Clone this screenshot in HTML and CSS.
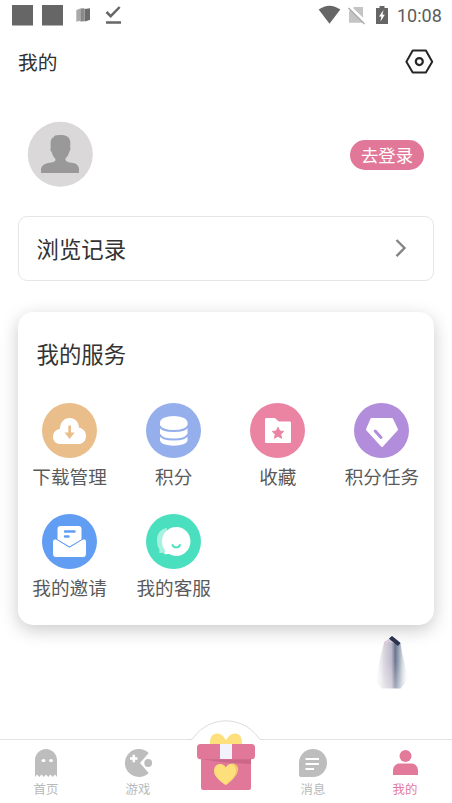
FILE: index.html
```html
<!DOCTYPE html>
<html lang="zh-CN">
<head>
<meta charset="utf-8">
<meta name="viewport" content="width=device-width, initial-scale=1">
<title>我的</title>
<link rel="stylesheet" href="styles.css">
</head>
<body>
<div class="app">
  <header class="status">
    <svg width="130" height="30" viewBox="0 0 130 30">
      <path fill="#666" d="M12 5h21v20.500h-21zM42 5h21v20.500h-21z"/>
      <path fill="#aaa" d="M76.300 10l4-1.600v12.400l-4 1z"/>
      <path fill="#888" d="M80.300 8.400l4.200-.2v13l-4.200 .4z"/>
      <path fill="#6c6c6c" d="M84.500 9l5.500-.8v11.600l-4 1.400h-1.500z"/>
      <path stroke="#aaa" stroke-width=".5" d="M80.300 9v12M84.300 9v12"/>
      <path fill="none" stroke="#666" stroke-width="2.500" d="M106.500 12l4.200 4.200 9-9.200M106 22.500h15"/>
    </svg>
    <svg class="signals" width="75" height="30" viewBox="316 0 75 30">
      <path fill="#666" d="M318.700 9.600Q329.500 1.700 340.300 9.600L329.500 23.800z"/>
      <path fill="#c4c4c4" d="M354 7h9v15.700h-14V11.500z"/>
      <path stroke="#fff" stroke-width="3.500" d="M349 6.500L366 23"/>
      <path stroke="#aaa" stroke-width="1.500" d="M348.500 8L364.500 24"/>
      <path fill="#666" d="M379.500 6h5v2h3.500v16h-12V8h3.500z"/>
      <path fill="#fff" d="M383.500 10l-4.500 6.500h2.300l-.8 5 4.300-6.700h-2.300z"/>
    </svg>
    <span class="clock">10:08</span>
  </header>
  <div class="titlebar">
    <h1>我的</h1>
    <svg width="30" height="30" viewBox="404 47 30 30" fill="none" stroke="#262626" stroke-width="2" stroke-linejoin="round">
      <path d="M412.700 50.600h13.200l6.300 11.200-6.300 10.700h-13.200l-6.300-10.700z"/><circle cx="419.300" cy="61.600" r="3.500" stroke-width="2.200"/>
    </svg>
  </div>
  <section class="profile">
    <svg width="66" height="66" viewBox="27 121 66 66">
      <circle cx="60.300" cy="154.300" r="32.500" fill="#dad8d9"/>
      <path fill="#999" d="M41 173v-3c0-4 3-6 7-7 5-.8 8-1 7.500-4-2-2-3.300-4.500-3.800-7-1.600-1-1.700-3-.9-4.500-.3-6-.3-9 2.600-10 .3-1.800 2-2.300 4-2.300 4-.3 9 0 11 2.300 2 2 2.300 5 1.700 9.500.7 1.500.5 3.500-.7 4.500-.7 3-2 5-4 7-.4 3 3 4 7.600 4.600 4 .7 6 2.900 6 6.900v3z"/>
    </svg>
    <button class="login">去登录</button>
  </section>
  <a class="history"><span>浏览记录</span>
    <svg width="16" height="22" viewBox="0 0 16 22" fill="none" stroke="#858585" stroke-width="2.400"><path d="M3.500 3l8 8-8 8.200"/></svg>
  </a>
  <section class="services">
    <h2>我的服务</h2>
    <div class="grid">
      <div class="service"><svg viewBox="42 403 55 55"><circle cx="69.500" cy="430.500" r="27.500" fill="#e9be8b"/><path fill="#fff" d="M61 444c-5 0-8-3.200-8-7.100 0-4.400 3-7.300 7-8.100 0-6 4-10.800 9.500-10.800s9.500 4.200 9.500 9.800c4.200.5 7 4 7 8.100 0 4.800-3 8.100-8 8.100z"/><path fill="#e9be8b" d="M68.300 425.500h2.700v7h3.700l-5.100 6.500-5-6.500h3.700z"/></svg><span>下载管理</span></div>
      <div class="service"><svg viewBox="146 403 55 55"><circle cx="173.500" cy="430.500" r="27.500" fill="#95aeec"/><path fill="#fff" d="M160 422.500v17.500c0 7.500 27.500 7.500 27.500 0v-17.500z"/><ellipse cx="173.700" cy="422.500" rx="13.700" ry="6.600" fill="#fff"/><path fill="none" stroke="#95aeec" stroke-width="2" d="M159.500 426c3 6.700 25.500 6.700 28.500 0M159.500 434.500c3 6.800 25.500 6.800 28.500 0"/></svg><span>积分</span></div>
      <div class="service"><svg viewBox="250 403 55 55"><circle cx="277.500" cy="430.500" r="27.500" fill="#eb84a3"/><path fill="#fff" d="M266.500 418h8.300l4 3.500h10.700c1 0 1.500.6 1.500 1.500v18.500c0 1-.5 1.500-1.500 1.500h-23c-1 0-1.500-.5-1.500-1.500v-22c0-1 .5-1.500 1.500-1.500z"/><path fill="#eb84a3" stroke="#eb84a3" stroke-width="1" stroke-linejoin="round" d="M278 427.200l1.700 3.800 4 .4-3 2.800.9 4-3.600-2-3.600 2 .9-4-3-2.800 4-.4z"/></svg><span>收藏</span></div>
      <div class="service"><svg viewBox="354 403 55 55"><circle cx="381.500" cy="430.500" r="27.500" fill="#b18ddb"/><path fill="#fff" stroke="#fff" stroke-width="2" stroke-linejoin="round" d="M371.500 419h20.500l5 10.500-15 16.500-15-16.500z"/><path stroke="#b18ddb" stroke-width="3" stroke-linecap="round" d="M375.200 431l5.800 6.500"/></svg><span>积分任务</span></div>
      <div class="service"><svg viewBox="42 514 55 55"><circle cx="69.500" cy="541.500" r="27.500" fill="#609df3"/><path fill="#fff" d="M60.500 526h18c2 0 3 1 3 3v10.500l-12 7-12-7V529c0-2 1-3 3-3z"/><path stroke="#609df3" stroke-width="2.400" stroke-linecap="round" d="M65 531.500h9.500M65 536.500h3.500"/><path fill="#fff" stroke="#609df3" stroke-width="1" d="M56 539l13.500 8.200 13.500-8.200c2-.4 3.500 1 3.500 3v11c0 3-1 4.500-4 4.500h-26c-3 0-4-1.500-4-4.500v-11c0-2 1.500-3.400 3.500-3z"/></svg><span>我的邀请</span></div>
      <div class="service"><svg viewBox="146 514 55 55"><circle cx="173.500" cy="541.500" r="27.500" fill="#49dfbf"/><path fill="#a8f0df" d="M167 528c-7 1-10 6-10 12 0 5 1 8 2.500 9.500l-.3 3.500 4-.2 3.800 1.200z"/><path fill="#fff" d="M176.300 527c8 0 14.200 6.300 14.200 14.300s-6.200 14.700-14.200 14.700c-2.500 0-5-.8-7-2l-5 .2 .7-4.200c-2.200-2.500-3-5-3-8.700 0-8 6.300-14.300 14.300-14.300z"/><path fill="none" stroke="#49dfbf" stroke-width="1.900" stroke-linecap="round" d="M172.500 545c1.500 3.200 6 3.200 7.500 0"/></svg><span>我的客服</span></div>
    </div>
  </section>
  <svg class="crystal" width="44" height="58" viewBox="370 634 44 58">
    <defs>
      <linearGradient id="body"><stop offset="0" stop-color="#eee" stop-opacity="0"/><stop offset=".25" stop-color="#dbd6df"/><stop offset=".48" stop-color="#bdb8ca"/><stop offset=".6" stop-color="#65718d"/><stop offset=".74" stop-color="#a8b2c0"/><stop offset="1" stop-color="#eef2f4" stop-opacity="0"/></linearGradient>
      <linearGradient id="fade" x2="0" y2="1"><stop offset="0" stop-color="#fff" stop-opacity="0"/><stop offset=".45" stop-color="#fff" stop-opacity=".05"/><stop offset="1" stop-color="#fff" stop-opacity=".4"/></linearGradient>
    </defs>
    <path fill="url(#body)" d="M384 643l8-7 8.500 7 2 12 6 24-8 9.500h-19l-6-7 5-26z"/>
    <path fill="url(#fade)" d="M382 640h20l10 49h-38z"/>
    <path fill="#d9cbd9" d="M384 642l7-4 4 5-6-1-5 4z"/><path fill="#29334f" d="M389 638.500l3-2.500 8.500 7-2.500 3-7.500-6z"/>
  </svg>
  <nav class="tabs">
    <svg class="arch" width="74" height="22" viewBox="189 719 74 22"><path fill="#fff" d="M189 739.500h2q2 0 4-3c16-20.500 46-20.500 62 0q2 3 4 3h2v1.500h-74z"/><path fill="none" stroke="#dcdcdc" d="M189 739.500h2q1.500 0 3-2.500c16-21.500 48-21.500 64 0q1.500 2.500 3 2.500h2"/></svg>
    <div class="tab"><svg viewBox="31 748 30 30"><path fill="#bdbdbd" d="M35 777v-17c0-6 5-11 11-11s11 5 11 11v17l-2-2.500-2.300 2.500-2.200-2.500-2.200 2.500-2.300-2.500-2.200 2.500-2.300-2.500-2.200 2.500-2.200-2.500z"/><ellipse cx="43.500" cy="760.500" rx="2" ry="1.500" fill="#fff"/><ellipse cx="51" cy="760.500" rx="2" ry="1.500" fill="#fff"/></svg><span>首页</span></div>
    <div class="tab"><svg viewBox="123 748 30 30"><path fill="#bdbdbd" d="M148.700 753a14 14 0 1 0 0 20l-8.700-10z"/><circle cx="148.200" cy="763" r="3.900" fill="#bdbdbd"/><path stroke="#fff" stroke-width="2.500" d="M130 758.500h7.500M133.800 754.800v7.400"/></svg><span>游戏</span></div>
    <div class="tab gift"><svg viewBox="196 732 60 60"><path fill="#fddf7b" d="M210 745c-.5-7 2-11.500 7-11.500 4 0 7 3 9 7 2-4 5-7 9-7 5 0 7.500 4.500 7 11.500z"/><path fill="#e27899" d="M201 756h50v31.500a2.500 2.500 0 0 1-2.500 2.500h-45a2.500 2.500 0 0 1-2.500-2.500z"/><path fill="#cb6889" d="M201 759h50v5q-25-.5-50-5z"/><rect x="197" y="744" width="58" height="15.200" rx="3.500" fill="#e27899"/><path fill="#f2f2fa" d="M220 744h12v15h-12z"/><path fill="#efc765" d="M226.500 767c5-6.500 13-3 11.500 4-1 5-6.500 10-12 14z"/><path fill="#fddf7b" d="M225.500 785c-5.500-4-11.500-8.500-11.500-14 0-7 8-9.500 11.800-3.500 3.200-6 10-4 10.200 3 0 5-5 11-10.500 14.500z"/></svg></div>
    <div class="tab"><svg viewBox="298 748 30 30"><path fill="#bdbdbd" d="M299 763a14 14 0 1 1 14 14h-12q-2 0-2-2z"/><path stroke="#fff" stroke-width="1.900" d="M305.500 759h13.500M305.500 764h13.500M305.500 769h8.500"/></svg><span>消息</span></div>
    <div class="tab active"><svg viewBox="390 748 30 30"><circle cx="405.500" cy="756" r="6" fill="#e47a9a"/><path fill="#e47a9a" d="M393 775v-4c0-5 3-7.500 7-7.500h11c4 0 7 2.500 7 7.500v4z"/></svg><span>我的</span></div>
  </nav>
</div>
</body>
</html>
```
FILE: styles.css
```css
* { box-sizing: border-box; }
body { margin: 0; background: #fff; color: #333; font-family: "Noto Sans CJK SC", sans-serif; font-weight: 400; }
svg { display: block; flex: none; }
h1, h2 { margin: 0; font-weight: 400; }
.app { position: relative; display: flex; flex-direction: column; width: 100%; height: 803px; overflow: hidden; }
.status { display: flex; align-items: center; height: 30px; flex: none; }
.signals { margin-left: auto; }
.clock { width: 55px; margin-right: 6px; padding: 1px 0 0 6px; font: 400 18px/30px Roboto, sans-serif; color: #5c5c5c; }
.titlebar { display: flex; align-items: center; justify-content: space-between; height: 64px; padding: 0 18px; }
.titlebar h1 { font-size: 19.700px; line-height: 30px; color: #303030; }
.profile { display: flex; align-items: center; justify-content: space-between; height: 66px; margin-top: 27px; padding: 0 28px 0 27px; }
.login { width: 74px; height: 30px; margin-top: 1px; padding: 0; border: 0; border-radius: 15px; background: #e27899; color: #fff; font: 17.400px/30px "Noto Sans CJK SC", sans-serif; }
.history { display: flex; align-items: center; justify-content: space-between; height: 65px; margin: 29px 18px 0 17.500px; padding: 0 24px 1px 18px; border: 1px solid #e6e6e6; border-radius: 9px; font-size: 22.400px; }
.services { height: 313px; margin: 31px 18px 0 17.500px; padding-top: 22px; border-radius: 15px; background: #fff; box-shadow: 0 5px 18px rgba(0, 0, 0, .21); }
.services h2 { padding-left: 19px; font-size: 22.400px; line-height: 38px; }
.grid { display: grid; grid-template-columns: repeat(4, 1fr); grid-auto-rows: 111px; margin-top: 31px; }
.service { display: flex; flex-direction: column; align-items: center; font-size: 18.600px; line-height: 35px; color: #5a5a5a; white-space: nowrap; }
.service svg { width: 55px; height: 55px; }
.crystal { position: absolute; left: 370px; top: 634px; filter: blur(.4px); }
.tabs { position: relative; display: grid; grid-template-columns: 92px 92px 84px 90px 94px; height: 64px; margin-top: auto; border-top: 1px solid #e3e3e3; background: #fff; }
.arch { position: absolute; left: 189px; top: -21px; }
.tab { display: flex; flex-direction: column; align-items: center; padding-top: 8px; font-size: 12.400px; line-height: 23px; color: #b9b9b9; }
.tab svg { width: 30px; height: 30px; }
.gift { position: relative; padding: 0; }
.gift svg { width: 60px; height: 60px; margin-top: -8px; }
.active { color: #e47a9a; }
```
